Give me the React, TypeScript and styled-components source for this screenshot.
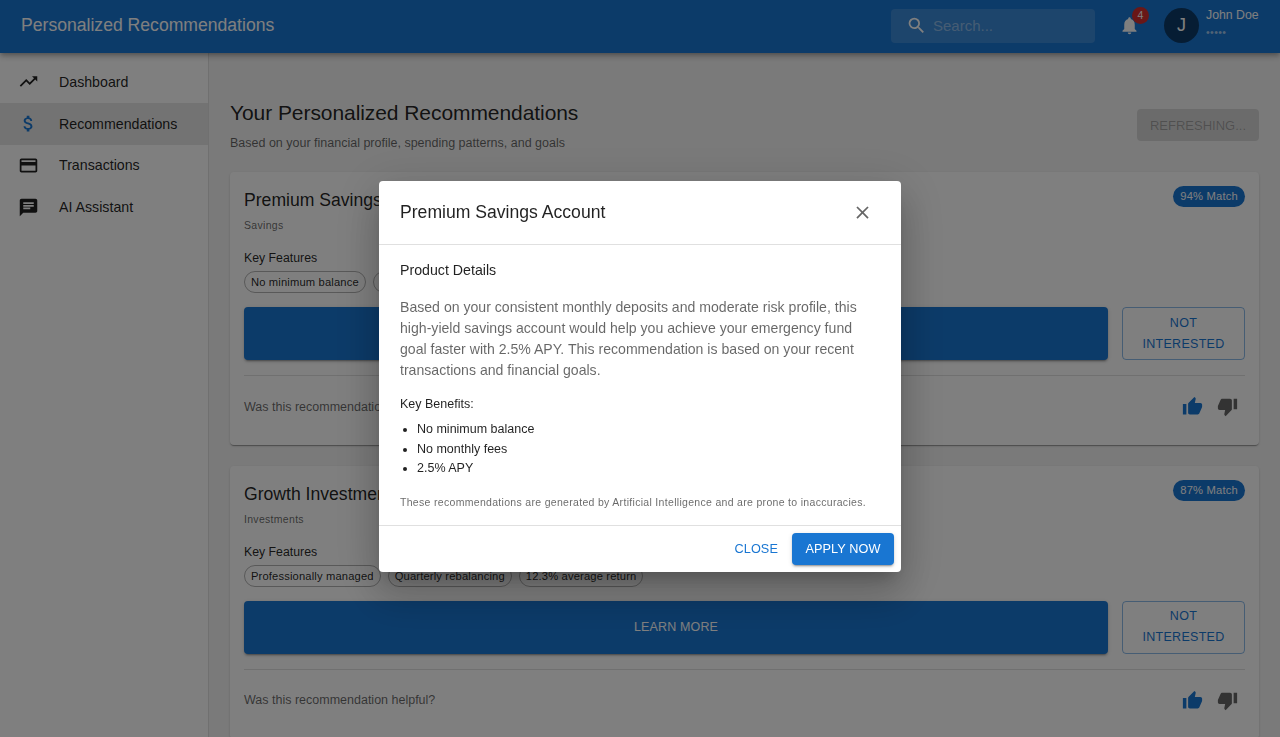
import React from 'react';
import styled, { createGlobalStyle } from 'styled-components';
import {
  MdAttachMoney,
  MdChat,
  MdClose,
  MdCreditCard,
  MdNotifications,
  MdSearch,
  MdThumbDown,
  MdThumbUp,
  MdTrendingUp,
} from 'react-icons/md';

const GlobalStyle = createGlobalStyle`
  html, body {
    margin: 0;
    height: 100%;
    overflow: hidden;
    background: #f5f5f5;
    font-family: "Liberation Sans", Arial, sans-serif;
    color: rgba(0, 0, 0, 0.87);
  }
  * { box-sizing: border-box; }
`;

const Page = styled.div`
  height: 737px;
  display: flex;
  flex-direction: column;
  overflow: hidden;
`;

const AppBar = styled.header`
  height: 53px;
  flex: none;
  display: flex;
  align-items: center;
  padding: 0 21px 2px;
  background: #1976d2;
  color: #fff;
  box-shadow: 0 2px 4px -1px rgba(0,0,0,.2), 0 4px 5px rgba(0,0,0,.14), 0 1px 10px rgba(0,0,0,.12);
  position: relative;
  z-index: 2;
`;

const AppTitle = styled.div`
  flex: 1;
  font-size: 17.6px;
`;

const SearchBox = styled.div`
  width: 204px;
  height: 34px;
  margin-right: 24px;
  padding-left: 15px;
  display: flex;
  align-items: center;
  gap: 6px;
  border-radius: 4px;
  background: rgba(255, 255, 255, 0.15);
  font-size: 15px;
  color: rgba(255, 255, 255, 0.42);
  svg { color: #fff; flex: none; }
`;

const BellWrap = styled.div`
  position: relative;
  width: 21px;
  height: 21px;
  margin-right: 24px;
  color: #fff;
`;

const Badge = styled.span`
  position: absolute;
  top: -8px;
  left: 13px;
  width: 17px;
  height: 17px;
  border-radius: 50%;
  background: #d32f2f;
  font-size: 10.5px;
  line-height: 17px;
  text-align: center;
`;

const Avatar = styled.div`
  width: 35px;
  height: 35px;
  border-radius: 50%;
  background: #0d3b69;
  display: flex;
  align-items: center;
  justify-content: center;
  font-size: 18px;
  margin-right: 7px;
`;

const UserBlock = styled.div`
  width: 54px;
  margin: 0 -1px 4px 0;
`;

const UserName = styled.div`
  font-size: 12.3px;
  line-height: 17px;
  white-space: nowrap;
`;

const UserSub = styled.div`
  font-size: 10.5px;
  line-height: 17px;
  letter-spacing: 0.4px;
  color: rgba(255, 255, 255, 0.6);
`;

const Body = styled.div`
  flex: 1;
  display: flex;
  min-height: 0;
`;

const Sidebar = styled.nav`
  width: 209px;
  flex: none;
  padding-top: 8px;
  background: #fff;
  border-right: 1px solid rgba(0, 0, 0, 0.12);
`;

const NavItem = styled.div<{ $active?: boolean }>`
  height: 41.8px;
  display: flex;
  align-items: center;
  padding-left: 18px;
  background: ${p => (p.$active ? '#e6e6e6' : 'transparent')};
  font-size: 14.2px;
  svg { flex: none; margin-right: 20px; color: ${p => (p.$active ? '#1976d2' : 'rgba(0,0,0,.87)')}; }
`;

const Main = styled.main`
  flex: 1;
  padding: 45px 21px 0;
  min-width: 0;
  overflow: hidden;
`;

const PageHead = styled.div`
  display: flex;
  justify-content: space-between;
  align-items: flex-start;
  margin-bottom: 19px;
`;

const PageTitle = styled.h1`
  margin: 0;
  font-size: 21px;
  line-height: 29px;
  font-weight: 400;
  letter-spacing: -0.07px;
`;

const PageSub = styled.p`
  margin: 6px 0 0;
  font-size: 12.5px;
  line-height: 20px;
  color: rgba(0, 0, 0, 0.6);
`;

const RefreshButton = styled.div`
  width: 122px;
  height: 32px;
  margin-top: 11px;
  display: flex;
  align-items: center;
  justify-content: center;
  border-radius: 4px;
  background: rgba(0, 0, 0, 0.12);
  color: rgba(0, 0, 0, 0.26);
  font-size: 13px;
`;

const Card = styled.section`
  height: 273px;
  margin-bottom: 20.6px;
  padding: 14px;
  background: #fff;
  border-radius: 4px;
  box-shadow: 0 2px 1px -1px rgba(0,0,0,.2), 0 1px 1px rgba(0,0,0,.14), 0 1px 3px rgba(0,0,0,.12);
`;

const CardHead = styled.div`
  display: flex;
  justify-content: space-between;
  align-items: flex-start;
`;

const CardTitle = styled.h2`
  margin: 0;
  font-size: 17.6px;
  line-height: 28px;
  font-weight: 400;
`;

const Category = styled.div`
  margin-top: 2px;
  font-size: 10.5px;
  line-height: 18px;
  letter-spacing: 0.3px;
  color: rgba(0, 0, 0, 0.6);
`;

const MatchChip = styled.span`
  padding: 0 7px;
  height: 21px;
  line-height: 21px;
  border-radius: 11px;
  background: #1976d2;
  color: #fff;
  font-size: 11.2px;
  letter-spacing: 0.2px;
`;

const FeaturesLabel = styled.div`
  margin-top: 15px;
  font-size: 12.3px;
  line-height: 18px;
`;

const ChipRow = styled.div`
  display: flex;
  gap: 7px;
  margin-top: 4px;
`;

const FeatureChip = styled.span`
  height: 22px;
  padding: 0 6px;
  line-height: 20px;
  border: 1px solid rgba(0, 0, 0, 0.3);
  border-radius: 11px;
  font-size: 11.2px;
  letter-spacing: 0.15px;
`;

const Actions = styled.div`
  display: flex;
  gap: 14px;
  margin-top: 14px;
`;

const LearnMore = styled.div`
  flex: 1;
  height: 53px;
  display: flex;
  align-items: center;
  justify-content: center;
  border-radius: 4px;
  background: #1976d2;
  color: #fff;
  font-size: 12.5px;
  letter-spacing: 0.15px;
  box-shadow: 0 3px 1px -2px rgba(0,0,0,.2), 0 2px 2px rgba(0,0,0,.14), 0 1px 5px rgba(0,0,0,.12);
`;

const NotInterested = styled.div`
  width: 123px;
  height: 53px;
  padding: 0 14px;
  display: flex;
  align-items: center;
  justify-content: center;
  text-align: center;
  border: 1px solid rgba(25, 118, 210, 0.5);
  border-radius: 4px;
  color: #1976d2;
  font-size: 12.5px;
  line-height: 21px;
  letter-spacing: 0.3px;
`;

const Feedback = styled.div`
  display: flex;
  align-items: center;
  justify-content: space-between;
  height: 62px;
  margin-top: 15px;
  border-top: 1px solid rgba(0, 0, 0, 0.12);
  font-size: 12.5px;
  color: rgba(0, 0, 0, 0.6);
`;

const Thumbs = styled.div`
  display: flex;
  gap: 14px;
  margin-right: 7px;
`;

const Backdrop = styled.div`
  position: fixed;
  inset: 0;
  z-index: 10;
  display: flex;
  align-items: flex-start;
  justify-content: center;
  padding-top: 181px;
  background: rgba(0, 0, 0, 0.5);
`;

const Dialog = styled.div`
  width: 522px;
  height: 391px;
  background: #fff;
  border-radius: 4px;
  box-shadow: 0 11px 15px -7px rgba(0,0,0,.2), 0 24px 38px 3px rgba(0,0,0,.14), 0 9px 46px 8px rgba(0,0,0,.12);
`;

const DialogHead = styled.div`
  height: 64px;
  display: flex;
  align-items: center;
  justify-content: space-between;
  padding: 0 28px 0 21px;
  border-bottom: 1px solid rgba(0, 0, 0, 0.12);
  font-size: 17.6px;
  svg { color: rgba(0, 0, 0, 0.6); }
`;

const DialogBody = styled.div`
  height: 281px;
  padding: 15px 21px 0;
  border-bottom: 1px solid rgba(0, 0, 0, 0.12);
`;

const DetailsTitle = styled.div`
  font-size: 14.2px;
  line-height: 20px;
`;

const DetailsText = styled.p`
  margin: 17px 0 0;
  font-size: 14.1px;
  line-height: 21px;
  color: rgba(0, 0, 0, 0.6);
`;

const BenefitsTitle = styled.div`
  margin-top: 13px;
  font-size: 12.5px;
  line-height: 20px;
`;

const BenefitList = styled.ul`
  margin: 6px 0 0;
  padding-left: 17px;
`;

const Benefit = styled.li`
  font-size: 12.5px;
  line-height: 19.6px;
`;

const Disclaimer = styled.div`
  margin-top: 14px;
  font-size: 10.5px;
  line-height: 18px;
  letter-spacing: 0.31px;
  color: rgba(0, 0, 0, 0.6);
`;

const DialogFoot = styled.div`
  height: 46px;
  display: flex;
  align-items: center;
  justify-content: flex-end;
  gap: 14px;
  padding-right: 7px;
`;

const CloseButton = styled.span`
  font-size: 12.7px;
  letter-spacing: 0.1px;
  color: #1976d2;
`;

const ApplyButton = styled.div`
  width: 102px;
  height: 32px;
  display: flex;
  align-items: center;
  justify-content: center;
  border-radius: 4px;
  background: #1976d2;
  color: #fff;
  font-size: 12.7px;
  letter-spacing: 0.1px;
  box-shadow: 0 3px 1px -2px rgba(0,0,0,.2), 0 2px 2px rgba(0,0,0,.14), 0 1px 5px rgba(0,0,0,.12);
`;

const navItems = [
  { label: 'Dashboard', icon: <MdTrendingUp size={21} /> },
  { label: 'Recommendations', icon: <MdAttachMoney size={21} />, active: true },
  { label: 'Transactions', icon: <MdCreditCard size={21} /> },
  { label: 'AI Assistant', icon: <MdChat size={21} /> },
];

const recommendations = [
  {
    title: 'Premium Savings Account',
    category: 'Savings',
    match: '94% Match',
    features: ['No minimum balance', 'No monthly fees', '2.5% APY'],
  },
  {
    title: 'Growth Investment Portfolio',
    category: 'Investments',
    match: '87% Match',
    features: ['Professionally managed', 'Quarterly rebalancing', '12.3% average return'],
  },
];

export default function App() {
  return (
    <Page>
      <GlobalStyle />
      <AppBar>
        <AppTitle>Personalized Recommendations</AppTitle>
        <SearchBox>
          <MdSearch size={21} />
          Search...
        </SearchBox>
        <BellWrap>
          <MdNotifications size={21} />
          <Badge>4</Badge>
        </BellWrap>
        <Avatar>J</Avatar>
        <UserBlock>
          <UserName>John Doe</UserName>
          <UserSub>•••••</UserSub>
        </UserBlock>
      </AppBar>
      <Body>
        <Sidebar>
          {navItems.map(item => (
            <NavItem key={item.label} $active={item.active}>
              {item.icon}
              {item.label}
            </NavItem>
          ))}
        </Sidebar>
        <Main>
          <PageHead>
            <div>
              <PageTitle>Your Personalized Recommendations</PageTitle>
              <PageSub>Based on your financial profile, spending patterns, and goals</PageSub>
            </div>
            <RefreshButton>REFRESHING...</RefreshButton>
          </PageHead>
          {recommendations.map(rec => (
            <Card key={rec.title}>
              <CardHead>
                <CardTitle>{rec.title}</CardTitle>
                <MatchChip>{rec.match}</MatchChip>
              </CardHead>
              <Category>{rec.category}</Category>
              <FeaturesLabel>Key Features</FeaturesLabel>
              <ChipRow>
                {rec.features.map(f => (
                  <FeatureChip key={f}>{f}</FeatureChip>
                ))}
              </ChipRow>
              <Actions>
                <LearnMore>LEARN MORE</LearnMore>
                <NotInterested>NOT INTERESTED</NotInterested>
              </Actions>
              <Feedback>
                Was this recommendation helpful?
                <Thumbs>
                  <MdThumbUp size={21} color="#1976d2" />
                  <MdThumbDown size={21} color="rgba(0,0,0,.6)" />
                </Thumbs>
              </Feedback>
            </Card>
          ))}
        </Main>
      </Body>
      <Backdrop>
        <Dialog>
          <DialogHead>
            Premium Savings Account
            <MdClose size={21} />
          </DialogHead>
          <DialogBody>
            <DetailsTitle>Product Details</DetailsTitle>
            <DetailsText>
              Based on your consistent monthly deposits and moderate risk profile, this high-yield
              savings account would help you achieve your emergency fund goal faster with 2.5% APY.
              This recommendation is based on your recent transactions and financial goals.
            </DetailsText>
            <BenefitsTitle>Key Benefits:</BenefitsTitle>
            <BenefitList>
              <Benefit>No minimum balance</Benefit>
              <Benefit>No monthly fees</Benefit>
              <Benefit>2.5% APY</Benefit>
            </BenefitList>
            <Disclaimer>
              These recommendations are generated by Artificial Intelligence and are prone to inaccuracies.
            </Disclaimer>
          </DialogBody>
          <DialogFoot>
            <CloseButton>CLOSE</CloseButton>
            <ApplyButton>APPLY NOW</ApplyButton>
          </DialogFoot>
        </Dialog>
      </Backdrop>
    </Page>
  );
}
